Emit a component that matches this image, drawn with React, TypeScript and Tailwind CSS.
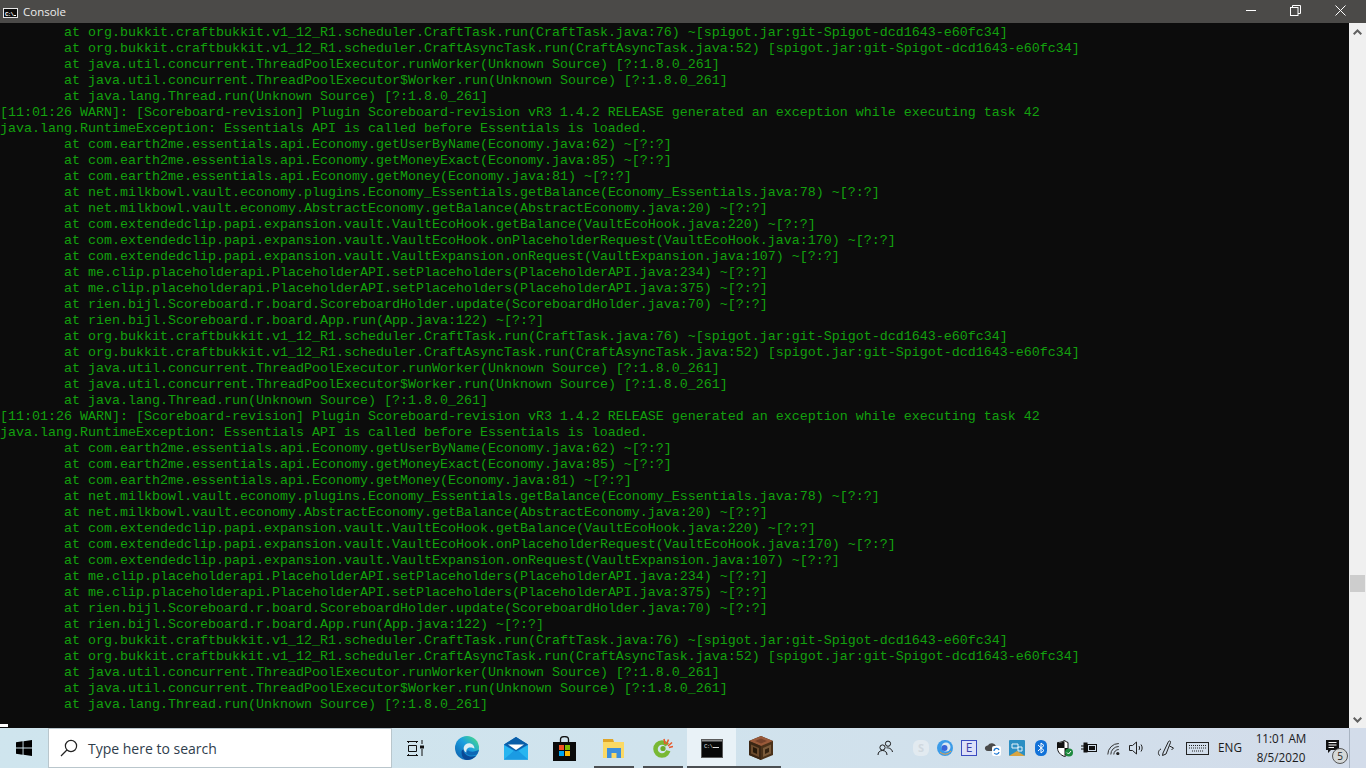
import type { ReactNode } from 'react';

const stackTail = [
  '\tat org.bukkit.craftbukkit.v1_12_R1.scheduler.CraftTask.run(CraftTask.java:76) ~[spigot.jar:git-Spigot-dcd1643-e60fc34]',
  '\tat org.bukkit.craftbukkit.v1_12_R1.scheduler.CraftAsyncTask.run(CraftAsyncTask.java:52) [spigot.jar:git-Spigot-dcd1643-e60fc34]',
  '\tat java.util.concurrent.ThreadPoolExecutor.runWorker(Unknown Source) [?:1.8.0_261]',
  '\tat java.util.concurrent.ThreadPoolExecutor$Worker.run(Unknown Source) [?:1.8.0_261]',
  '\tat java.lang.Thread.run(Unknown Source) [?:1.8.0_261]',
];

const exceptionBlock = [
  '[11:01:26 WARN]: [Scoreboard-revision] Plugin Scoreboard-revision vR3 1.4.2 RELEASE generated an exception while executing task 42',
  'java.lang.RuntimeException: Essentials API is called before Essentials is loaded.',
  '\tat com.earth2me.essentials.api.Economy.getUserByName(Economy.java:62) ~[?:?]',
  '\tat com.earth2me.essentials.api.Economy.getMoneyExact(Economy.java:85) ~[?:?]',
  '\tat com.earth2me.essentials.api.Economy.getMoney(Economy.java:81) ~[?:?]',
  '\tat net.milkbowl.vault.economy.plugins.Economy_Essentials.getBalance(Economy_Essentials.java:78) ~[?:?]',
  '\tat net.milkbowl.vault.economy.AbstractEconomy.getBalance(AbstractEconomy.java:20) ~[?:?]',
  '\tat com.extendedclip.papi.expansion.vault.VaultEcoHook.getBalance(VaultEcoHook.java:220) ~[?:?]',
  '\tat com.extendedclip.papi.expansion.vault.VaultEcoHook.onPlaceholderRequest(VaultEcoHook.java:170) ~[?:?]',
  '\tat com.extendedclip.papi.expansion.vault.VaultExpansion.onRequest(VaultExpansion.java:107) ~[?:?]',
  '\tat me.clip.placeholderapi.PlaceholderAPI.setPlaceholders(PlaceholderAPI.java:234) ~[?:?]',
  '\tat me.clip.placeholderapi.PlaceholderAPI.setPlaceholders(PlaceholderAPI.java:375) ~[?:?]',
  '\tat rien.bijl.Scoreboard.r.board.ScoreboardHolder.update(ScoreboardHolder.java:70) ~[?:?]',
  '\tat rien.bijl.Scoreboard.r.board.App.run(App.java:122) ~[?:?]',
  ...stackTail,
];

const lines = [...stackTail, ...exceptionBlock, ...exceptionBlock];

function CmdIcon({ size }: { size: 'sm' | 'lg' }) {
  if (size === 'sm') {
    return (
      <svg width="15" height="10" viewBox="0 0 15 10" className="mt-[2px]">
        <rect x="0.5" y="0.5" width="14" height="9" fill="#0c0c0c" stroke="#e6e6e6" />
        <text x="2" y="7.5" fontSize="6" fontWeight="700" fill="#fff" fontFamily="'Liberation Mono', monospace" textLength="9">C:\</text>
        <rect x="11" y="7" width="2" height="1" fill="#fff" />
      </svg>
    );
  }
  return (
    <svg width="22" height="19" viewBox="0 0 22 19">
      <rect x="0.5" y="0.5" width="21" height="18" fill="#080808" stroke="#5a5a5a" />
      <rect x="1" y="1" width="20" height="1.5" fill="#8f8f8f" />
      <text x="3" y="9" fontSize="6" fill="#ddd" fontFamily="'Liberation Mono', monospace" textLength="9">C:\</text>
      <rect x="12" y="8" width="6" height="1" fill="#ddd" />
    </svg>
  );
}

function AppItem({ children, bar, active }: { children: ReactNode; bar?: 'inset' | 'full' | 'tail'; active?: boolean }) {
  return (
    <div className={`relative flex h-full w-[49px] items-center justify-center ${active ? 'bg-[#e9f2f7]' : ''}`}>
      {children}
      {bar === 'inset' && <div className="absolute bottom-0 left-[5px] right-[4px] h-[2px] bg-[#4b4f52]" />}
      {bar === 'full' && <div className="absolute bottom-0 left-0 right-0 h-[2px] bg-[#4b4f52]" />}
      {bar === 'tail' && <div className="absolute bottom-0 left-0 right-[4px] h-[2px] bg-[#4b4f52]" />}
    </div>
  );
}

function Tray({ children, w = 'w-6' }: { children: ReactNode; w?: string }) {
  return <div className={`flex h-full items-center justify-center ${w}`}>{children}</div>;
}

export default function App() {
  return (
    <div className="flex h-screen w-full flex-col overflow-hidden bg-[#0c0c0c]">
      {/* title bar */}
      <div className="flex h-[23px] shrink-0 items-center bg-[#4b4a48] pl-[3px] pr-[3px]">
        <CmdIcon size="sm" />
        <span className="ml-[5px] mt-[1px] text-[11.5px] leading-none text-[#ececec] [font-family:'Open_Sans',sans-serif]">Console</span>
        <div className="ml-auto flex h-full">
          <div className="flex w-[45px] items-center justify-center">
            <div className="-mt-[3px] h-px w-[10px] bg-white" />
          </div>
          <div className="flex w-[45px] items-center justify-center">
            <svg width="11" height="11" viewBox="0 0 11 11" fill="none" stroke="#fff" className="-mt-[2px]">
              <rect x="0.5" y="2.5" width="7.5" height="8" />
              <path d="M2.5 2.5V0.5H10.5V8.5H8" />
            </svg>
          </div>
          <div className="flex w-[45px] items-center justify-center">
            <svg width="11" height="11" viewBox="0 0 11 11" fill="none" stroke="#fff" className="-mt-[2px]">
              <path d="M0.5 0.5L10.5 10.5M10.5 0.5L0.5 10.5" />
            </svg>
          </div>
        </div>
      </div>

      {/* console output */}
      <div className="flex min-h-0 flex-1">
        <div className="relative min-w-0 flex-1 overflow-hidden whitespace-pre pt-[2px] text-[13.333px] leading-[16px] text-[#13a10e] [tab-size:8] [font-family:'Liberation_Mono',monospace]">
          {lines.map((line, i) => (
            <div key={i} className="h-4">{line}</div>
          ))}
          <div className="absolute bottom-[1px] left-0 h-[3px] w-2 bg-white" />
        </div>
        <div className="flex w-[17px] shrink-0 flex-col items-center bg-[#f0f0f0]">
          <div className="flex h-[17px] w-full items-center justify-center">
            <svg width="9" height="6" viewBox="0 0 9 6" fill="none" stroke="#606060" strokeWidth="2">
              <path d="M0.7 5.3L4.5 1.5L8.3 5.3" />
            </svg>
          </div>
          <div className="mt-[535px] h-[17px] w-[15px] bg-[#cdcdcd]" />
          <div className="mt-auto flex h-[17px] w-full items-center justify-center">
            <svg width="9" height="6" viewBox="0 0 9 6" fill="none" stroke="#606060" strokeWidth="2">
              <path d="M0.7 0.7L4.5 4.5L8.3 0.7" />
            </svg>
          </div>
        </div>
      </div>

      {/* taskbar */}
      <div className="flex h-[40px] shrink-0 items-center bg-linear-to-r from-[#cfe5ee] via-[#d0e3ed] to-[#d3dcea] text-[#1a1a1a] [font-family:'Open_Sans',sans-serif]">
        <div className="flex h-full w-12 shrink-0 items-center justify-center">
          <svg width="16" height="16" viewBox="0 0 16 16" fill="#000">
            <path d="M0 2.3L6.6 1.3V7.6H0ZM7.5 1.2L16 0V7.6H7.5ZM0 8.4H6.6V14.7L0 13.7ZM7.5 8.4H16V16L7.5 14.8Z" />
          </svg>
        </div>
        <div className="flex h-full w-[344px] shrink-0 items-center border border-[#b9c6cc] bg-white pl-[11px]">
          <svg width="18" height="18" viewBox="0 0 18 18" fill="none" stroke="#222" strokeWidth="1.2">
            <circle cx="11" cy="7" r="5.6" />
            <path d="M6.9 11L1 17" />
          </svg>
          <span className="ml-[10px] text-[14px] text-[#2f3e4c]">Type here to search</span>
        </div>

        <div className="flex h-full w-[50px] items-center justify-center pr-[3px]">
          <svg width="17" height="16" viewBox="0 0 17 16" fill="none" stroke="#111">
            <path d="M0 1.5H11M0 15.5H11M1.5 5.5H9.5V11.5H1.5Z" />
            <path d="M1.5 1.5V3M9.5 1.5V3M1.5 14V15.5M9.5 14V15.5" />
            <path d="M15 0V4M15 9V16" />
            <rect x="13" y="5.5" width="4" height="3" fill="#111" stroke="none" />
          </svg>
        </div>

        <AppItem>
          <svg width="24" height="24" viewBox="0 0 24 24">
            <defs>
              <linearGradient id="edgeA" x1="0" y1="1" x2="1" y2="0">
                <stop offset="0" stopColor="#0b5aa8" />
                <stop offset="0.55" stopColor="#1a9fe0" />
                <stop offset="0.85" stopColor="#3ecf9a" />
                <stop offset="1" stopColor="#6bdc5a" />
              </linearGradient>
            </defs>
            <circle cx="12" cy="12" r="12" fill="url(#edgeA)" />
            <path d="M8.5 13.5C8.5 19 15 22.5 21.5 19.5C19 22.5 15 24 12 24C9 24 6.5 21 6.5 16C6.5 14.5 7.5 13.5 8.5 13.5Z" fill="#0a4a97" />
            <path d="M10 15C11 19 16 21 22 18.5C23 16.8 23.7 15 24 13.5C21 15.8 15 16.5 13.5 14.5Z" fill="#0d67b5" />
            <path d="M19.5 12.5C19.5 8 14 5.5 10.5 8.5C7.5 11 8.5 15.5 11.5 16.5C10.8 14 12.3 11.5 15 11.5C16.8 11.5 18.3 12 19.5 12.5Z" fill="#dbeef4" />
          </svg>
        </AppItem>
        <AppItem>
          <svg width="24" height="23" viewBox="0 0 24 23">
            <path d="M0 7.5L12 0L24 7.5V22.5H0Z" fill="#0f7ccf" />
            <path d="M0 7.5L12 0L24 7.5L12 14Z" fill="#0a5ea8" />
            <path d="M4 7.5H20L12 13Z" fill="#fff" />
            <path d="M0 8L12 15L24 8V22.5H0Z" fill="#27b5f0" />
            <path d="M0 22.5L10 13.5L12 15L14 13.5L24 22.5Z" fill="#1a9be3" />
          </svg>
        </AppItem>
        <AppItem>
          <svg width="23" height="25" viewBox="0 0 23 25">
            <path d="M7.5 6V3.5C7.5 1.5 9 0.6 11.5 0.6S15.5 1.5 15.5 3.5V6" fill="none" stroke="#111" strokeWidth="1.3" />
            <rect x="0" y="6" width="23" height="19" fill="#0a0a0a" />
            <rect x="6" y="9" width="5" height="5" fill="#f25022" />
            <rect x="12" y="9" width="5" height="5" fill="#7fba00" />
            <rect x="6" y="15" width="5" height="5" fill="#00a4ef" />
            <rect x="12" y="15" width="5" height="5" fill="#ffb900" />
          </svg>
        </AppItem>
        <AppItem bar="inset">
          <svg width="21" height="19" viewBox="0 0 21 19">
            <path d="M0 0H10L11 3H0Z" fill="#e0a526" />
            <rect x="0" y="3" width="21" height="16" fill="#fbd964" />
            <path d="M4 19V9H18V19H13.5V14H8.5V19Z" fill="#3e8fdc" />
          </svg>
        </AppItem>
        <AppItem bar="inset">
          <svg width="20" height="20" viewBox="0 0 20 20">
            <circle cx="9" cy="11" r="6.5" fill="none" stroke="#78b833" strokeWidth="4.5" />
            <path d="M9 11L17 5L20 14Z" fill="#d0e3ed" />
            <circle cx="10" cy="10.5" r="2.6" fill="#6cab2a" />
            <path d="M11 1L12 6M15.5 1.5L13.5 6.5M19 4.5L15 8M20 8.5L16 9.5" stroke="#e8592c" strokeWidth="1.6" />
          </svg>
        </AppItem>
        <AppItem bar="full" active>
          <CmdIcon size="lg" />
        </AppItem>
        <AppItem bar="tail">
          <svg width="24" height="24" viewBox="0 0 24 24">
            <path d="M12 0L24 5V19L12 24L0 19V5Z" fill="#4a3119" />
            <path d="M12 0L24 5L12 10L0 5Z" fill="#9a5a3a" />
            <path d="M6 5L12 2.5L18 5L12 7.5Z" fill="#75422b" />
            <path d="M0 5L12 10V24L0 19Z" fill="#3a2614" />
            <path d="M2 8.5L10 12V21L2 17.5Z" fill="#6b4a2c" />
            <path d="M4 11L8 12.8V18L4 16.2Z" fill="#241708" />
            <path d="M14 12L22 8.5V17.5L14 21Z" fill="#7a5a3a" />
            <path d="M16 13.5L20 11.7V16L16 18Z" fill="#33210f" />
          </svg>
        </AppItem>

        {/* tray */}
        <div className="ml-auto flex h-full items-center">
          <Tray w="w-12">
            <svg width="16" height="16" viewBox="0 0 16 16" fill="none" stroke="#1a1a1a">
              <circle cx="11" cy="3.7" r="2.6" />
              <circle cx="5.5" cy="7.5" r="2.6" />
              <path d="M1 15C1 12 3 10.5 5.5 10.5S10 12 10 15M9.5 7.8C12 7.8 14.8 8.6 15.5 12" />
            </svg>
          </Tray>
          <Tray>
            <div className="flex h-4 w-4 items-center justify-center rounded-[6px] bg-[#e2eaf0] text-[11px] font-bold text-[#d0d8df]">S</div>
          </Tray>
          <Tray>
            <svg width="16" height="16" viewBox="0 0 16 16">
              <circle cx="8" cy="8" r="8" fill="#3b9be8" />
              <circle cx="9" cy="7" r="4.5" fill="#d9e6f2" />
              <circle cx="7.5" cy="8" r="3" fill="#3864d8" />
              <path d="M3 12C6 15 11 15 14 11" stroke="#f0a040" strokeWidth="1" fill="none" />
            </svg>
          </Tray>
          <Tray>
            <div className="flex h-4 w-4 items-center justify-center border border-[#3a4bc0] bg-[#dde0f8] text-[12px] leading-none text-[#3a3fa8]">E</div>
          </Tray>
          <Tray>
            <svg width="18" height="16" viewBox="0 0 18 16">
              <path d="M4 11C1.5 11 0.5 9 1 7.5C1.5 6 3 5.5 4 5.5C5 3.5 7 3 9 3.5C11 4 12 5.5 12 7L9 11Z" fill="#4a4a4a" />
              <rect x="8" y="6" width="9" height="10" rx="2" fill="#fff" />
              <path d="M10 11A2.6 2.6 0 0 1 15 10M15 12A2.6 2.6 0 0 1 10.3 13" stroke="#1a76d2" strokeWidth="1.3" fill="none" />
            </svg>
          </Tray>
          <Tray>
            <svg width="16" height="16" viewBox="0 0 16 16">
              <rect width="16" height="16" rx="1" fill="#2b8fc4" />
              <path d="M0 16L8 11L16 16Z" fill="#d9a441" />
              <path d="M3 4H9V8H3ZM9 7H13V11H9Z" fill="none" stroke="#e6f3fa" />
            </svg>
          </Tray>
          <Tray>
            <svg width="12" height="16" viewBox="0 0 12 16">
              <rect width="12" height="16" rx="5.5" fill="#1272d8" />
              <path d="M3 5L9 10.5L6 13V3L9 5.5L3 11" fill="none" stroke="#fff" strokeWidth="1" />
            </svg>
          </Tray>
          <Tray>
            <svg width="16" height="17" viewBox="0 0 16 17">
              <path d="M7.5 0.5C5 2 3 2.5 0.5 2.5V8C0.5 12 3.5 15 7.5 16.5C9 16 10 15.3 11 14.5V2.5C10 2 8.5 1.5 7.5 0.5Z" fill="#fff" stroke="#111" />
              <path d="M7.5 1V8H0.7V3H3ZM7.5 8H11V14L7.5 16Z" fill="#111" />
              <circle cx="12" cy="12.5" r="4" fill="#1d8a3d" />
              <path d="M10 12.5L11.5 14L14 11" stroke="#fff" fill="none" />
            </svg>
          </Tray>
          <Tray>
            <svg width="16" height="12" viewBox="0 0 16 12" fill="none" stroke="#111">
              <path d="M0 4H3M0 7H3" />
              <rect x="3" y="1" width="3" height="9" fill="#111" />
              <rect x="6.5" y="2.5" width="9" height="7" />
              <rect x="8" y="4" width="6" height="4" fill="#111" stroke="none" />
            </svg>
          </Tray>
          <Tray>
            <svg width="13" height="13" viewBox="0 0 13 13" fill="none" stroke="#333" className="mt-[1px]">
              <path d="M0.8 12.5A11 11 0 0 1 11.8 1.5M3.8 12.5A8 8 0 0 1 11.8 4.5M6.8 12.5A5 5 0 0 1 11.8 7.5" />
              <circle cx="10.8" cy="11.5" r="1.6" fill="#222" stroke="none" />
            </svg>
          </Tray>
          <Tray>
            <svg width="16" height="14" viewBox="0 0 16 14" fill="none" stroke="#222">
              <path d="M0.5 4.5H3.5L7.5 1V13L3.5 9.5H0.5Z" />
              <path d="M10 5C10.7 6 10.7 8 10 9M12 3.5C13.5 5.5 13.5 8.5 12 10.5" />
            </svg>
          </Tray>
          <Tray w="w-8">
            <svg width="17" height="16" viewBox="0 0 17 16" fill="none" stroke="#222">
              <path d="M6 13L11.5 1.5C12.5 0.5 14 1 13.5 2.5L9 14L5.5 15.5Z" />
              <path d="M4 9C1 10 0.5 15 3 15.5" />
              <path d="M12.5 6L16.5 8L14.5 10" />
            </svg>
          </Tray>
          <Tray w="w-8">
            <svg width="23" height="13" viewBox="0 0 23 13" fill="none" stroke="#222">
              <rect x="0.5" y="0.5" width="22" height="12" />
              <path d="M3 3.5H20M3 6H20M6 9H17" strokeDasharray="1 1" />
            </svg>
          </Tray>
          <Tray w="w-[34px]">
            <span className="text-[11.7px] text-[#1a1a1a]">ENG</span>
          </Tray>
          <div className="flex h-full w-[68px] flex-col items-center justify-center text-[11.7px] leading-[19px] text-[#1a1a1a]">
            <span>11:01 AM</span>
            <span>8/5/2020</span>
          </div>
          <div className="relative flex h-full w-[34px] items-center justify-center">
            <svg width="13" height="13" viewBox="0 0 13 13" className="-mt-[3px]">
              <path d="M0 0H13V10H5L2 13V10H0Z" fill="#111" />
              <path d="M2.5 2.5H10.5M2.5 5H10.5M2.5 7.5H8" stroke="#fff" />
            </svg>
            <div className="absolute left-[17px] top-[20px] flex h-4 w-4 items-center justify-center rounded-full border border-[#555] bg-[#d5d8d8] text-[10px] leading-none text-[#222]">5</div>
          </div>
          <div className="h-full w-[17px] border-l border-[#a9b4c2]" />
        </div>
      </div>
    </div>
  );
}
